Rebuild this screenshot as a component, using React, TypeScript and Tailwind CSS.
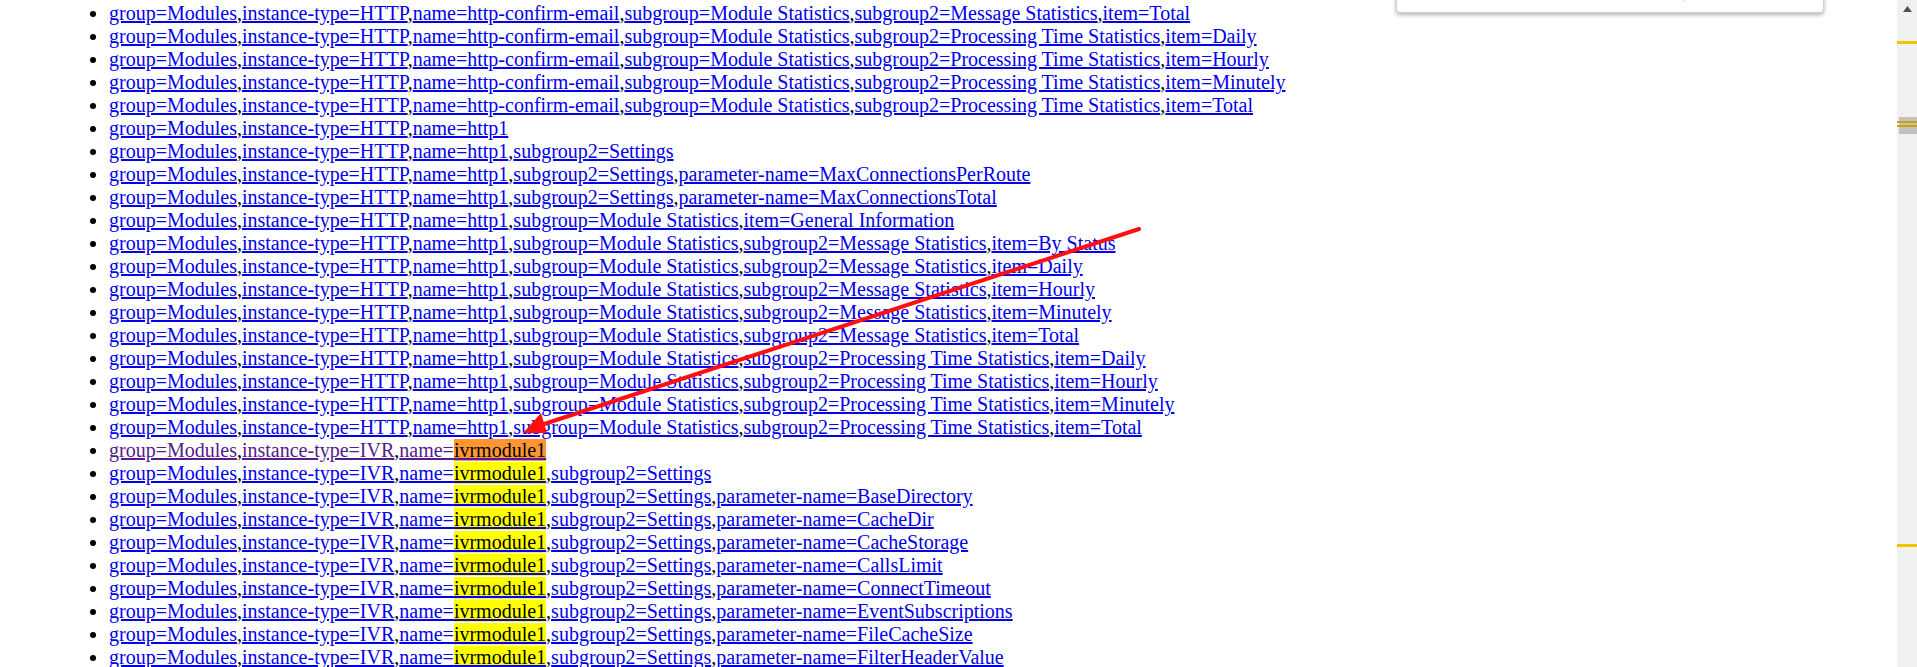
import React from 'react';

type Seg = { text: string; hit?: 'active' | 'match' };
type Row = { segs: Seg[]; visited?: boolean };

const HTTP_CONFIRM = ['group=Modules', 'instance-type=HTTP', 'name=http-confirm-email', 'subgroup=Module Statistics'];
const HTTP1 = ['group=Modules', 'instance-type=HTTP', 'name=http1'];

const plain = (parts: string[]): Row => ({ segs: parts.map((text) => ({ text })) });

const ivr = (rest: string[], visited = false): Row => ({
    visited,
    segs: [
        { text: 'group=Modules' },
        { text: 'instance-type=IVR' },
        { text: 'name=', hit: visited ? 'active' : 'match' },
        ...rest.map((text) => ({ text })),
    ],
});

const ROWS: Row[] = [
    plain([...HTTP_CONFIRM, 'subgroup2=Message Statistics', 'item=Total']),
    plain([...HTTP_CONFIRM, 'subgroup2=Processing Time Statistics', 'item=Daily']),
    plain([...HTTP_CONFIRM, 'subgroup2=Processing Time Statistics', 'item=Hourly']),
    plain([...HTTP_CONFIRM, 'subgroup2=Processing Time Statistics', 'item=Minutely']),
    plain([...HTTP_CONFIRM, 'subgroup2=Processing Time Statistics', 'item=Total']),
    plain(HTTP1),
    plain([...HTTP1, 'subgroup2=Settings']),
    plain([...HTTP1, 'subgroup2=Settings', 'parameter-name=MaxConnectionsPerRoute']),
    plain([...HTTP1, 'subgroup2=Settings', 'parameter-name=MaxConnectionsTotal']),
    plain([...HTTP1, 'subgroup=Module Statistics', 'item=General Information']),
    plain([...HTTP1, 'subgroup=Module Statistics', 'subgroup2=Message Statistics', 'item=By Status']),
    plain([...HTTP1, 'subgroup=Module Statistics', 'subgroup2=Message Statistics', 'item=Daily']),
    plain([...HTTP1, 'subgroup=Module Statistics', 'subgroup2=Message Statistics', 'item=Hourly']),
    plain([...HTTP1, 'subgroup=Module Statistics', 'subgroup2=Message Statistics', 'item=Minutely']),
    plain([...HTTP1, 'subgroup=Module Statistics', 'subgroup2=Message Statistics', 'item=Total']),
    plain([...HTTP1, 'subgroup=Module Statistics', 'subgroup2=Processing Time Statistics', 'item=Daily']),
    plain([...HTTP1, 'subgroup=Module Statistics', 'subgroup2=Processing Time Statistics', 'item=Hourly']),
    plain([...HTTP1, 'subgroup=Module Statistics', 'subgroup2=Processing Time Statistics', 'item=Minutely']),
    plain([...HTTP1, 'subgroup=Module Statistics', 'subgroup2=Processing Time Statistics', 'item=Total']),
    ivr([], true),
    ivr(['subgroup2=Settings']),
    ivr(['subgroup2=Settings', 'parameter-name=BaseDirectory']),
    ivr(['subgroup2=Settings', 'parameter-name=CacheDir']),
    ivr(['subgroup2=Settings', 'parameter-name=CacheStorage']),
    ivr(['subgroup2=Settings', 'parameter-name=CallsLimit']),
    ivr(['subgroup2=Settings', 'parameter-name=ConnectTimeout']),
    ivr(['subgroup2=Settings', 'parameter-name=EventSubscriptions']),
    ivr(['subgroup2=Settings', 'parameter-name=FileCacheSize']),
    ivr(['subgroup2=Settings', 'parameter-name=FilterHeaderValue']),
];

function Link({ seg, visited }: { seg: Seg; visited?: boolean }) {
    const color = visited ? 'text-[#551a8b] decoration-[#551a8b]' : 'text-[#0000ee] decoration-[#0000ee]';
    return (
        <a href="#" className={`underline ${color}`}>
            {seg.text}
            {/* find-in-page highlight on the module name */}
            {seg.hit && (
                <span className={`text-black ${seg.hit === 'active' ? 'bg-[#ff9632]' : 'bg-[#ffff00]'}`}>
                    ivrmodule1
                </span>
            )}
        </a>
    );
}

// bottom edge of the browser find bar, rest is scrolled off the top
function FindBar() {
    return (
        <div className="absolute left-[1396px] top-[-40px] w-[428px] h-[53px] flex items-end pl-[286px] pb-[11px] bg-white border border-[#d0d0d0] rounded-b-[4px] shadow-[0_2px_4px_rgba(0,0,0,0.3)]">
            <div className="w-px h-[2px] bg-[#bdbdbd]" />
        </div>
    );
}

function Scrollbar() {
    return (
        <div className="flex flex-col w-[20px] h-full shrink-0 bg-[#f1f1f1]">
            <div className="flex justify-center pt-[6px] pl-[1px]">
                <svg width="9" height="6" viewBox="0 0 9 6">
                    <path d="M4.5 0 L9 6 L0 6 Z" fill="#505050" />
                </svg>
            </div>
            <div className="h-[3px] mt-[29px] bg-[#f2c500]" />
            <div className="flex flex-col h-[17px] mt-[73px] ml-[2px] pt-[4px] gap-[2px] bg-[#c1c1c1]">
                <div className="h-[2px] -ml-[2px] bg-[#c9a400]" />
                <div className="h-[2px] -ml-[2px] bg-[#c9a400]" />
            </div>
            <div className="h-[3px] mt-[410px] bg-[#f2c500]" />
        </div>
    );
}

export default function App() {
    return (
        <div className="flex w-[1917px] h-[667px] overflow-hidden bg-white">
            <div className="relative flex-1 h-full">
                <ul className="list-disc pl-[109px] pt-[2px] text-[20px] leading-[23px] text-black font-['Liberation_Serif','Times_New_Roman',serif] whitespace-nowrap">
                    {ROWS.map((row, i) => (
                        <li key={i}>
                            {row.segs.map((seg, j) => (
                                <React.Fragment key={j}>
                                    {j > 0 && ','}
                                    <Link seg={seg} visited={row.visited} />
                                </React.Fragment>
                            ))}
                        </li>
                    ))}
                </ul>

                {/* red annotation arrow */}
                <svg className="absolute left-0 top-0 pointer-events-none" width="1897" height="667">
                    <line x1="1139" y1="229" x2="532" y2="428" stroke="#ff1010" strokeWidth="4" strokeLinecap="round" />
                    <path d="M523 433 L541 413 L547 433 Z" fill="#ff1010" />
                </svg>

                <FindBar />
            </div>
            <Scrollbar />
        </div>
    );
}
